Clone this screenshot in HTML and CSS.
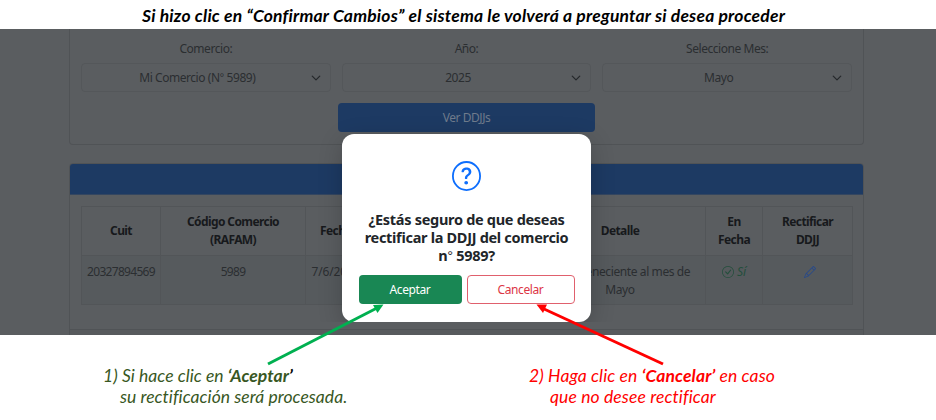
FILE: index.html
```html
<!DOCTYPE html>
<html lang="es">
<head>
<meta charset="utf-8">
<title>Rectificar DDJJ</title>
<link rel="stylesheet" href="styles.css">
</head>
<body>
<h1 class="caption"><span>Si hizo clic en “Confirmar Cambios” el sistema le volverá a preguntar si desea proceder</span></h1>
<main class="screen">
  <section class="card filters">
    <div class="fields">
      <div class="field"><label>Comercio:</label><div class="select"><span>Mi Comercio (N<span class="deg">°</span> 5989)</span><svg class="chevron" viewBox="0 0 16 16"><path d="m2 5 6 6 6-6"/></svg></div></div>
      <div class="field"><label>Año:</label><div class="select"><span>2025</span><svg class="chevron" viewBox="0 0 16 16"><path d="m2 5 6 6 6-6"/></svg></div></div>
      <div class="field"><label>Seleccione Mes:</label><div class="select"><span>Mayo</span><svg class="chevron" viewBox="0 0 16 16"><path d="m2 5 6 6 6-6"/></svg></div></div>
    </div>
    <div class="view">Ver DDJJs</div>
  </section>
  <section class="card results">
    <div class="bar"></div>
    <table>
      <colgroup><col class="c1"><col class="c2"><col class="c3"><col class="c4"><col class="c5"><col class="c6"><col class="c7"></colgroup>
      <tr><th>Cuit</th><th>Código Comercio<br>(RAFAM)</th><th>Fecha</th><th></th><th>Detalle</th><th>En<br>Fecha</th><th>Rectificar<br>DDJJ</th></tr>
      <tr><td class="num">20327894569</td><td class="num">5989</td><td class="date">7/6/2025</td><td></td><td class="detail">DJ perteneciente al mes de<br>Mayo</td>
        <td class="ok"><svg viewBox="0 0 16 16"><path d="M8 15A7 7 0 1 1 8 1a7 7 0 0 1 0 14m0 1A8 8 0 1 0 8 0a8 8 0 0 0 0 16"/><path d="m10.97 4.97-.02.022-3.473 4.425-2.093-2.094a.75.75 0 0 0-1.06 1.06L6.97 11.03a.75.75 0 0 0 1.079-.02l3.992-4.99a.75.75 0 0 0-1.071-1.05"/></svg> <i>Sí</i></td>
        <td class="edit"><svg viewBox="0 0 16 16"><path d="M12.146.146a.5.5 0 0 1 .708 0l3 3a.5.5 0 0 1 0 .708l-10 10a.5.5 0 0 1-.168.11l-5 2a.5.5 0 0 1-.65-.65l2-5a.5.5 0 0 1 .11-.168zM11.207 2.5 13.5 4.793 14.793 3.5 12.5 1.207zm1.586 3L10.5 3.207 4 9.707V10h.5a.5.5 0 0 1 .5.5v.5h.5a.5.5 0 0 1 .5.5v.5h.293zm-9.761 5.175-.106.106-1.528 3.821 3.821-1.528.106-.106A.5.5 0 0 1 5 12.5V12h-.5a.5.5 0 0 1-.5-.5V11h-.5a.5.5 0 0 1-.468-.325"/></svg></td></tr>
    </table>
    <div class="foot"></div>
  </section>
</main>
<div class="modal">
  <svg class="question" viewBox="0 0 16 16" preserveAspectRatio="none"><path d="M8 15A7 7 0 1 1 8 1a7 7 0 0 1 0 14m0 1A8 8 0 1 0 8 0a8 8 0 0 0 0 16"/><path d="M5.255 5.786a.237.237 0 0 0 .241.247h.825c.138 0 .248-.113.266-.25.09-.656.54-1.134 1.342-1.134.686 0 1.314.343 1.314 1.168 0 .635-.374.927-.965 1.371-.673.489-1.206 1.06-1.168 1.987l.003.217a.25.25 0 0 0 .25.246h.811a.25.25 0 0 0 .25-.25v-.105c0-.718.273-.927 1.01-1.486.609-.463 1.244-.977 1.244-2.056 0-1.511-1.276-2.241-2.673-2.241-1.267 0-2.655.59-2.75 2.286m1.557 5.763c0 .533.425.927 1.01.927.609 0 1.028-.394 1.028-.927 0-.552-.42-.94-1.029-.94-.584 0-1.009.388-1.009.94"/></svg>
  <h2>¿Estás seguro de que deseas<br>rectificar la DDJJ del comercio<br>n<span class="deg">°</span> 5989?</h2>
  <div class="actions"><div class="btn accept">Aceptar</div><div class="btn cancel">Cancelar</div></div>
</div>
<div class="notes">
  <p class="note yes"><span class="l1">1) Si hace clic en <b>‘Aceptar<span class="quote">’</span></b></span><span class="l2">su rectificación será procesada.</span></p>
  <p class="note no"><span class="l1">2) Haga clic en <b>‘Cancelar’</b> en caso</span><span class="l2">que no desee rectificar</span></p>
</div>
<svg class="arrows" viewBox="0 0 936 420">
  <path d="M268 364 377 308" stroke="#00b050" stroke-width="3"/><path d="M383.500 304.500 373 305 377.500 313z" fill="#00b050"/>
  <path d="M663 364 543 308.500" stroke="#f00" stroke-width="3"/><path d="M536.500 304.500 547 304.500 543 313z" fill="#f00"/>
</svg>
</body>
</html>
```
FILE: styles.css
```css
* { box-sizing: border-box; }
body { margin: 0; width: 936px; height: 420px; overflow: hidden; position: relative; background: #fff; font-family: "Noto Sans", "Open Sans", sans-serif; }
.caption { margin: 0; height: 29px; padding-left: 142px; font: italic bold 17.5px/31px Lato, sans-serif; color: #000; white-space: nowrap; letter-spacing: .2px; }
.screen { height: 306px; padding: 0 72px 0 69px; background: #5a5d60; overflow: hidden; font-size: 12px; color: #2b2e31; letter-spacing: -.45px; }
.card { border: 1px solid #505356; }
.filters { height: 116px; border-top: 0; border-radius: 0 0 4px 4px; padding: 10px 11px 0; }
.fields { display: flex; gap: 11px; }
.field { flex: 1; text-align: center; }
.field label { display: block; height: 24px; line-height: 19px; }
.select { display: flex; align-items: center; height: 29px; border: 1px solid #54575a; border-radius: 4px; padding: 0 9px; }
.select > span { flex: 1; padding-right: 7px; }
.deg { font-family: "Liberation Sans", sans-serif; font-weight: normal; line-height: 1; }
.chevron { width: 10px; height: 10px; fill: none; stroke: #25282b; stroke-width: 2; stroke-linecap: round; stroke-linejoin: round; }
.view { width: 257px; height: 29px; margin: 11px auto 0; border-radius: 4px; background: #1d3a63; color: #6f7b8c; text-align: center; line-height: 29px; }
.results { margin-top: 18px; height: 180px; border-radius: 4px 4px 0 0; overflow: hidden; }
.bar { height: 31px; background: #1d3a63; border-bottom: 1px solid #344660; }
table { width: 772px; margin: 11px 0 0 11px; table-layout: fixed; border-collapse: collapse; text-align: center; line-height: 18px; }
.c1 { width: 79px; } .c2 { width: 145px; } .c3 { width: 61px; } .c4 { width: 168px; } .c5 { width: 171px; } .c6 { width: 57px; } .c7 { width: 90px; }
th, td { height: 49px; border: 1px solid #525558; padding: 0; white-space: nowrap; }
th { color: #17191c; vertical-align: middle; letter-spacing: -.6px; }
td { background: #565a5d; vertical-align: top; padding-top: 7px; }
.num { letter-spacing: -.7px; }
.date { letter-spacing: -.15px; }
.detail { letter-spacing: -.4px; }
.ok { color: #234e3c; letter-spacing: 0; }
.ok svg { width: 12px; height: 12px; fill: currentColor; vertical-align: -2px; }
.edit svg { width: 12px; height: 12px; fill: #27498a; vertical-align: -2px; }
.edit { padding-left: 5px; }
.foot { margin-top: 24px; height: 10px; border-top: 1px solid #505356; background: #575a5d; }
.modal { position: absolute; left: 342px; top: 134px; width: 249px; height: 188px; border-radius: 12px; background: #fff; box-shadow: 0 6px 24px rgba(0,0,0,.2); clip-path: inset(-40px -40px 0 -40px); display: flex; flex-direction: column; align-items: center; padding-top: 27px; }
.question { width: 29px; height: 30px; fill: #0d6efd; flex: none; }
.modal h2 { margin: 19px 0 0; height: 54px; font-size: 14.5px; line-height: 18px; color: #212529; text-align: center; white-space: nowrap; letter-spacing: -.3px; }
.actions { display: flex; gap: 5px; width: 216px; margin-top: 11px; }
.btn { height: 29px; line-height: 29px; border-radius: 4px; text-align: center; font-size: 12px; letter-spacing: -.4px; }
.accept { width: 103px; background: #198754; color: #fff; }
.cancel { width: 108px; border: 1px solid #e0606d; color: #dc3545; line-height: 27px; }
.notes { display: flex; gap: 9px; padding: 30px 0 0 103px; font: italic 17.5px/21px Lato, sans-serif; white-space: nowrap; }
.note { margin: 0; flex: 0 0 417px; letter-spacing: .05px; }
.note > span { display: block; }
.yes { color: #385723; }
.no { color: #f00; letter-spacing: .12px; }
.yes .l2 { padding-left: 17px; }
.no .l2 { padding-left: 21px; }
.quote { color: #000; }
.arrows { position: absolute; left: 0; top: 0; width: 936px; height: 420px; pointer-events: none; }
```
